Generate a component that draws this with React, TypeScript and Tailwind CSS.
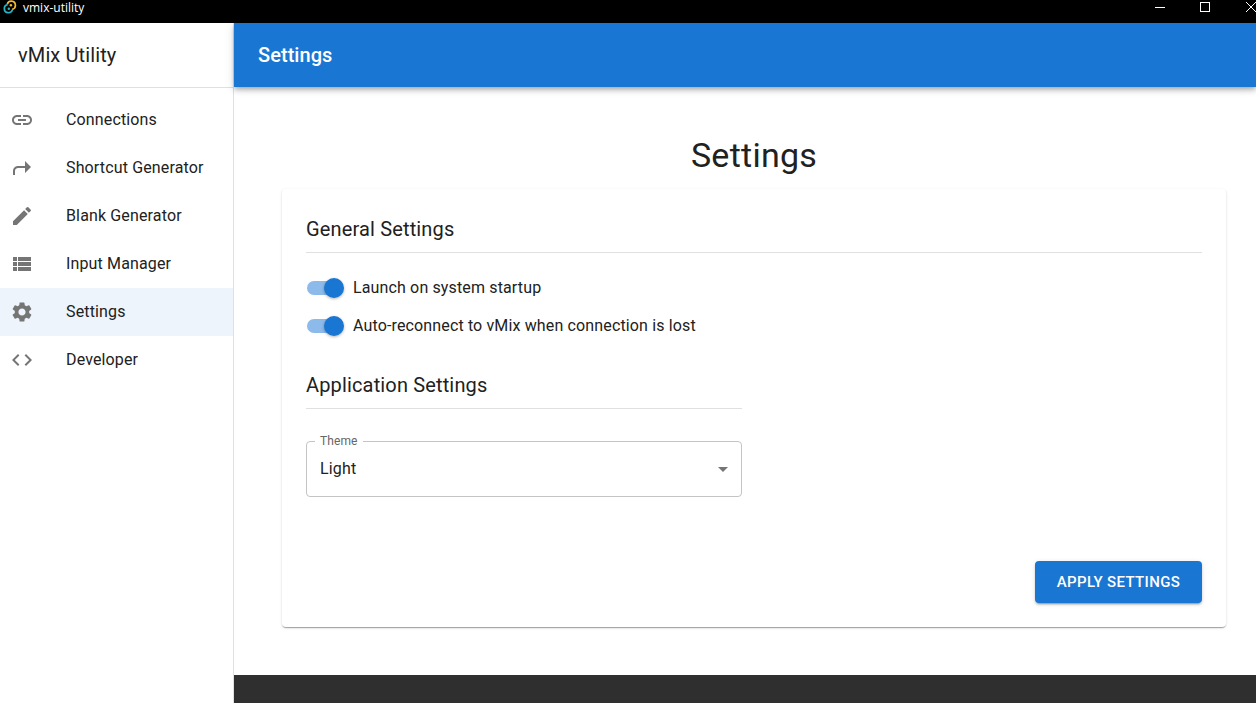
import React from "react";
import {
  MdLink,
  MdShortcut,
  MdEdit,
  MdViewList,
  MdSettings,
  MdCode,
  MdArrowDropDown,
} from "react-icons/md";

const items = [
  { label: "Connections", Icon: MdLink },
  { label: "Shortcut Generator", Icon: MdShortcut },
  { label: "Blank Generator", Icon: MdEdit },
  { label: "Input Manager", Icon: MdViewList },
  { label: "Settings", Icon: MdSettings, active: true },
  { label: "Developer", Icon: MdCode },
];

function TitleBar() {
  return (
    <header className="flex h-[23px] shrink-0 items-start justify-between bg-black text-white">
      <div className="flex items-start">
        <svg width="18" height="16" viewBox="0 0 18 16" fill="none">
          <path d="M7.300 4.300a4.100 4.100 0 1 1 4.800 5" stroke="#f5b82e" strokeWidth="1.700" />
          <circle cx="10.900" cy="5.300" r="1.250" fill="#f5b82e" />
          <path d="M12.400 9.600a4.100 4.100 0 1 1-4.800-5" stroke="#24b5c8" strokeWidth="1.700" />
          <circle cx="8.800" cy="8.800" r="1.250" fill="#24b5c8" />
        </svg>
        <span className="ml-[5px] font-['Open_Sans',sans-serif] text-[12px] leading-4">vmix-utility</span>
      </div>
      <svg width="106" height="16" viewBox="0 0 106 16" fill="none" stroke="#fff" shapeRendering="crispEdges">
        <path d="M5 7.5h10M50.500 2.500h9v9h-9z" />
        <path d="M96 2l10 10M96 12l10-10" shapeRendering="auto" />
      </svg>
    </header>
  );
}

function Toggle({ label }: { label: string }) {
  return (
    <label className="flex h-[38px] items-center">
      <span className="flex h-5 w-[38px] items-center">
        <span className="ml-px flex h-[14px] w-[34px] items-center rounded-full bg-[#8cbaea]">
          <span className="ml-[17px] size-5 shrink-0 rounded-full bg-[#1976d2] shadow-[0_1px_3px_rgba(0,0,0,0.3)]" />
        </span>
      </span>
      <span className="ml-[9px] text-[16px] tracking-[0.14px]">{label}</span>
    </label>
  );
}

export default function App() {
  return (
    <div className="flex h-[703px] w-[1256px] flex-col overflow-hidden bg-white font-[Roboto,sans-serif] text-[#212121]">
      <TitleBar />
      <div className="flex min-h-0 flex-1">
        <aside className="w-[234px] shrink-0 border-r border-[#e0e0e0]">
          <div className="flex h-[65px] items-center border-b border-[#e0e0e0] pl-[18px] text-[20px] font-normal tracking-[0.12px]">
            vMix Utility
          </div>
          <nav className="pt-2">
            {items.map(({ label, Icon, active }) => (
              <div key={label} className={active ? "flex h-12 items-center bg-[#edf4fb] pl-[10px]" : "flex h-12 items-center pl-[10px]"}>
                <Icon size={24} color="#757575" />
                <span className="ml-8 text-[16px] tracking-[0.14px]">{label}</span>
              </div>
            ))}
          </nav>
        </aside>
        <main className="flex min-w-0 flex-1 flex-col">
          <div className="z-10 flex h-16 shrink-0 items-center bg-[#1976d2] pl-6 text-[20px] font-medium tracking-[0.05px] text-white shadow-[0_2px_4px_-1px_rgba(0,0,0,0.2),0_4px_5px_rgba(0,0,0,0.14),0_1px_10px_rgba(0,0,0,0.12)]">
            Settings
          </div>
          <div className="flex flex-1 flex-col pr-[30px] pl-12">
            <h1 className="mt-[47px] h-[55px] text-center text-[34px] leading-[42px] tracking-[0.25px]">Settings</h1>
            <section className="flex h-[438px] flex-col rounded bg-white px-6 shadow-[0_2px_1px_-1px_rgba(0,0,0,0.2),0_1px_1px_rgba(0,0,0,0.14),0_1px_3px_rgba(0,0,0,0.12)]">
              <h2 className="mt-6 h-10 border-b border-[#e0e0e0] text-[20px] leading-8 tracking-[0.15px]">General Settings</h2>
              <div className="mt-4">
                <Toggle label="Launch on system startup" />
                <Toggle label="Auto-reconnect to vMix when connection is lost" />
              </div>
              <h2 className="mt-6 h-10 w-[436px] border-b border-[#e0e0e0] text-[20px] leading-8 tracking-[0.15px]">Application Settings</h2>
              <div className="relative mt-8 flex h-14 w-[436px] items-center justify-between rounded border border-[#c4c4c4] pr-[6px] pl-[13px]">
                <span className="absolute -top-[9px] left-[8px] bg-white px-[5px] text-[12px] leading-4 tracking-[0.11px] text-[#666]">Theme</span>
                <span className="text-[16px] tracking-[0.15px]">Light</span>
                <MdArrowDropDown size={24} color="#757575" />
              </div>
              <button className="mt-16 h-[42px] w-[167px] self-end rounded bg-[#1976d2] text-[15px] font-medium tracking-[0.35px] text-white shadow-[0_3px_1px_-2px_rgba(0,0,0,0.2),0_2px_2px_rgba(0,0,0,0.14),0_1px_5px_rgba(0,0,0,0.12)]">
                APPLY SETTINGS
              </button>
            </section>
          </div>
          <footer className="h-7 shrink-0 bg-[#2f2f2f]" />
        </main>
      </div>
    </div>
  );
}
